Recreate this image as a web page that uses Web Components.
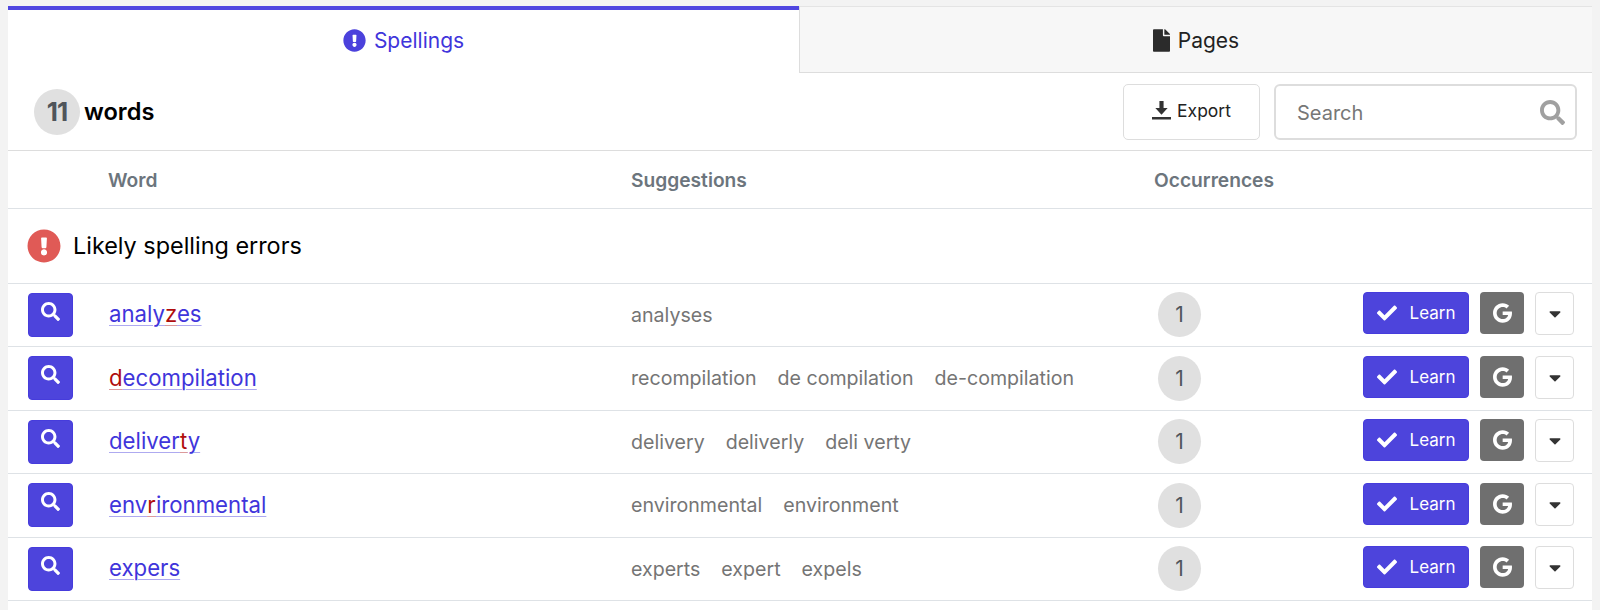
<!DOCTYPE html>
<html lang="en">
<head>
<meta charset="utf-8">
<title>Spellings</title>
<style>
  html, body { margin: 0; height: 610px; overflow: hidden; background: #f3f3f3; }
  body { padding: 6px 8px 0; box-sizing: border-box; font-family: Inter, Lato, "Noto Sans", sans-serif; }
</style>
</head>
<body>
<spell-panel>
  <tab-bar slot="tabs"></tab-bar>
  <spell-toolbar slot="toolbar" count="11"></spell-toolbar>
  <word-row word="analyzes" bad="5">
    <span>analyses</span>
  </word-row>
  <word-row word="decompilation" bad="0">
    <span>recompilation</span><span>de compilation</span><span>de-compilation</span>
  </word-row>
  <word-row word="deliverty" bad="7">
    <span>delivery</span><span>deliverly</span><span>deli verty</span>
  </word-row>
  <word-row word="envrironmental" bad="3">
    <span>environmental</span><span>environment</span>
  </word-row>
  <word-row word="expers">
    <span>experts</span><span>expert</span><span>expels</span>
  </word-row>
</spell-panel>

<script>
const ICONS = {
  circle: ["0 0 512 512", "M504 256c0 136.997-111.043 248-248 248S8 392.997 8 256C8 119.083 119.043 8 256 8s248 111.083 248 248zm-248 50c-25.405 0-46 20.595-46 46s20.595 46 46 46 46-20.595 46-46-20.595-46-46-46zm-43.673-165.346l7.418 136c.347 6.364 5.609 11.346 11.982 11.346h48.546c6.373 0 11.635-4.982 11.982-11.346l7.418-136c.375-6.874-5.098-12.654-11.982-12.654h-63.383c-6.884 0-12.356 5.78-11.981 12.654z"],
  file: ["0 0 384 512", "M224 136V0H24C10.7 0 0 10.7 0 24v464c0 13.3 10.7 24 24 24h336c13.3 0 24-10.7 24-24V160H248c-13.2 0-24-10.8-24-24zm160-14.1v6.1H256V0h6.1c6.4 0 12.5 2.5 17 7l97.9 98c4.5 4.5 7 10.6 7 16.9z"],
  search: ["0 0 512 512", "M505 442.7L405.3 343c-4.5-4.5-10.6-7-17-7H372c27.6-35.3 44-79.7 44-128C416 93.1 322.9 0 208 0S0 93.1 0 208s93.1 208 208 208c48.3 0 92.7-16.4 128-44v16.3c0 6.4 2.5 12.5 7 17l99.7 99.7c9.4 9.4 24.6 9.4 33.9 0l28.3-28.3c9.4-9.4 9.4-24.6.1-34zM208 336c-70.7 0-128-57.2-128-128 0-70.7 57.2-128 128-128 70.7 0 128 57.2 128 128 0 70.7-57.2 128-128 128z"],
  check: ["0 0 512 512", "M173.898 439.404l-166.4-166.4c-9.997-9.997-9.997-26.206 0-36.204l36.203-36.204c9.997-9.998 26.207-9.998 36.204 0L192 312.69 432.095 72.596c9.997-9.997 26.207-9.997 36.204 0l36.203 36.204c9.997 9.997 9.997 26.206 0 36.204l-294.4 294.401c-9.998 9.997-26.207 9.997-36.204-.001z"],
  google: ["0 0 488 512", "M488 261.8C488 403.3 391.1 504 248 504 110.8 504 0 393.2 0 256S110.8 8 248 8c66.8 0 123 24.5 166.3 64.9l-67.5 64.9C258.5 52.6 94.3 116.6 94.3 256c0 86.5 69.1 156.6 153.7 156.6 98.2 0 135-70.4 140.8-106.9H248v-85.3h236.1c2.3 12.7 3.9 24.9 3.9 41.4z"],
  download: ["0 0 512 512", "M200 0h112v190h110L256 372 90 190h110zM0 432h512v64H0z"],
  caret: ["0 0 320 512", "M31.3 192h257.3c17.8 0 26.7 21.5 14.1 34.1L174.1 354.8c-7.8 7.8-20.5 7.8-28.3 0L17.2 226.1C4.6 213.5 13.5 192 31.3 192z"]
}

class FaIcon extends HTMLElement {
  constructor() {
    super()
    this.attachShadow({mode: "open"})
    const [box, d] = ICONS[this.getAttribute("name")]
    this.shadowRoot.innerHTML = `
      <style>
        :host { display: inline-flex; line-height: 0; }
        svg { height: 100%; width: 100%; fill: currentColor; display: block; }
      </style>
      <svg viewBox="${box}"><path d="${d}"/></svg>
    `
  }
}
customElements.define("fa-icon", FaIcon)

class SpellPanel extends HTMLElement {
  constructor() {
    super()
    this.attachShadow({mode: "open"})
    this.shadowRoot.innerHTML = `
      <style>
        :host {
          display: block;
          background: #fff;
          height: 604px;
          color: #000;
        }
        .head {
          display: grid;
          grid-template-columns: 100px 523px 523px 1fr;
          height: 57px;
          align-items: center;
          border-bottom: 1px solid #dee2e6;
          font-size: 19.2px;
          font-weight: 600;
          color: #6c757d;
        }
        .group {
          display: flex;
          align-items: center;
          gap: 12px;
          height: 73.5px;
          padding-left: 19px;
          border-bottom: 1px solid #dee2e6;
          font-size: 23.4px;
        }
        .group fa-icon { width: 34px; height: 34px; color: #e05a56; }
      </style>
      <slot name="tabs"></slot>
      <slot name="toolbar"></slot>
      <div class="head">
        <span></span>
        <span>Word</span>
        <span>Suggestions</span>
        <span>Occurrences</span>
      </div>
      <div class="group"><fa-icon name="circle"></fa-icon>Likely spelling errors</div>
      <slot></slot>
    `
  }
}
customElements.define("spell-panel", SpellPanel)

class TabBar extends HTMLElement {
  constructor() {
    super()
    this.attachShadow({mode: "open"})
    this.shadowRoot.innerHTML = `
      <style>
        :host {
          display: grid;
          grid-template-columns: 791px 1fr;
          height: 67px;
          font-size: 21px;
        }
        .tab {
          display: flex;
          align-items: center;
          justify-content: center;
          gap: 8px;
          box-sizing: border-box;
        }
        .active {
          color: #3f35db;
          border-top: 4px solid #4f46e0;
          padding-bottom: 2px;
        }
        .active fa-icon { width: 23px; height: 23px; color: #4b41dc; }
        .other {
          background: #f7f7f7;
          color: #222;
          border-top: 1px solid #e4e4e4;
          border-left: 1px solid #ddd;
          border-bottom: 1px solid #ddd;
          padding-top: 2px;
        }
        .other fa-icon { width: 17px; height: 23px; color: #2b2b2b; }
      </style>
      <div class="tab active"><fa-icon name="circle"></fa-icon>Spellings</div>
      <div class="tab other"><fa-icon name="file"></fa-icon>Pages</div>
    `
  }
}
customElements.define("tab-bar", TabBar)

class SpellToolbar extends HTMLElement {
  constructor() {
    super()
    this.attachShadow({mode: "open"})
    this.shadowRoot.innerHTML = `
      <style>
        :host {
          display: flex;
          align-items: center;
          height: 78px;
          box-sizing: border-box;
          padding: 0 15px 0 26px;
          border-bottom: 1px solid #ddd;
        }
        .count {
          width: 46px;
          height: 46px;
          border-radius: 50%;
          background: #e0e0e0;
          color: #50555b;
          font-size: 26px;
          font-weight: 700;
          letter-spacing: -1px;
          display: flex;
          align-items: center;
          justify-content: center;
        }
        .label {
          margin-left: 4px;
          font-size: 23.6px;
          font-weight: 600;
          flex: 1;
        }
        .export {
          width: 137px;
          height: 56px;
          box-sizing: border-box;
          border: 1px solid #ddd;
          border-radius: 5px;
          padding-bottom: 2px;
          display: flex;
          align-items: center;
          justify-content: center;
          gap: 6px;
          font-size: 17.5px;
          color: #222;
        }
        .export fa-icon { width: 19px; height: 23px; color: #333; }
        .search {
          margin-left: 14px;
          width: 303px;
          height: 56px;
          box-sizing: border-box;
          border: 2px solid #ddd;
          border-radius: 6px;
          display: flex;
          align-items: center;
          justify-content: space-between;
          padding: 2px 10px 0 21px;
          font-size: 20px;
          color: #777;
        }
        .search fa-icon { width: 25px; height: 25px; color: #a0a0a0; }
      </style>
      <span class="count">${this.getAttribute("count")}</span>
      <span class="label">words</span>
      <div class="export"><fa-icon name="download"></fa-icon>Export</div>
      <div class="search">Search<fa-icon name="search"></fa-icon></div>
    `
  }
}
customElements.define("spell-toolbar", SpellToolbar)

class WordRow extends HTMLElement {
  constructor() {
    super()
    this.attachShadow({mode: "open"})
    const word = this.getAttribute("word")
    const bad = this.hasAttribute("bad") ? Number(this.getAttribute("bad")) : -1
    const letters = [...word].map((c, i) => i === bad ? `<b>${c}</b>` : c).join("")
    this.shadowRoot.innerHTML = `
      <style>
        :host {
          display: grid;
          grid-template-columns: 100px 523px 523px 1fr;
          align-items: center;
          height: 63.5px;
          box-sizing: border-box;
          border-bottom: 1px solid #dee2e6;
        }
        .find {
          margin-left: 20px;
          width: 45px;
          height: 44px;
          border-radius: 4px;
          border: 1px solid #463cdc;
          background: #4d44dc;
          color: #fff;
          display: flex;
          justify-content: center;
          padding-top: 8px;
          box-sizing: border-box;
        }
        .find fa-icon { width: 19px; height: 19px; }
        .word { margin: 0 0 2px 1px; }
        a {
          font-size: 22.2px;
          color: #3f35db;
          text-decoration: underline;
          text-decoration-color: #aeaaf0;
          text-decoration-thickness: 1px;
          text-underline-offset: 3px;
        }
        b {
          font-weight: 400;
          color: #b00d0d;
          text-decoration: underline;
          text-decoration-color: #dc9a9a;
          text-decoration-thickness: 1px;
          text-underline-offset: 3px;
        }
        .suggest {
          display: flex;
          gap: 21px;
          font-size: 19.6px;
          color: #757575;
        }
        .end {
          display: flex;
          align-items: flex-start;
          padding: 0 18px 0 4px;
        }
        .occ {
          width: 43px;
          height: 45px;
          border-radius: 50%;
          background: #e0e0e0;
          color: #50555b;
          font-size: 21px;
          display: flex;
          align-items: center;
          justify-content: center;
        }
        .learn {
          margin-left: auto;
          width: 106px;
          height: 42px;
          box-sizing: border-box;
          border: 1px solid #463cdc;
          border-radius: 4px;
          background: #4d44dc;
          color: #fff;
          font-size: 17px;
          display: flex;
          align-items: center;
          justify-content: center;
          gap: 13px;
        }
        .learn fa-icon { width: 20px; height: 20px; }
        .google {
          margin-left: 11px;
          width: 44px;
          height: 42px;
          border-radius: 4px;
          background: #6f6f6f;
          color: #fff;
          display: flex;
          align-items: center;
          justify-content: center;
        }
        .google fa-icon { width: 19px; height: 20px; }
        .more {
          margin-left: 11px;
          width: 39px;
          height: 43px;
          box-sizing: border-box;
          border: 1px solid #ddd;
          border-radius: 4px;
          display: flex;
          align-items: center;
          justify-content: center;
          color: #333;
        }
        .more fa-icon { width: 12px; height: 19px; }
      </style>
      <div class="find"><fa-icon name="search"></fa-icon></div>
      <div class="word"><a>${letters}</a></div>
      <div class="suggest"><slot></slot></div>
      <div class="end">
        <span class="occ">1</span>
        <span class="learn"><fa-icon name="check"></fa-icon>Learn</span>
        <span class="google"><fa-icon name="google"></fa-icon></span>
        <span class="more"><fa-icon name="caret"></fa-icon></span>
      </div>
    `
  }
}
customElements.define("word-row", WordRow)
</script>
</body>
</html>
